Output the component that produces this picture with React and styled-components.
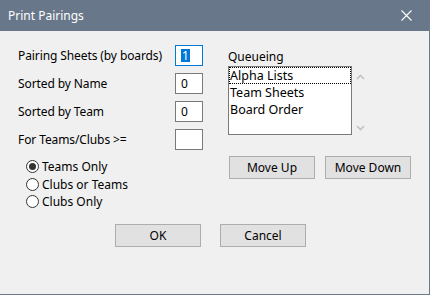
import React, { useState } from "react";
import styled, { createGlobalStyle } from "styled-components";

const GlobalStyle = createGlobalStyle`
  html, body {
    margin: 0;
    padding: 0;
    background: #f0f0f0;
  }
  * {
    box-sizing: border-box;
  }
`;

const Window = styled.div`
  width: 430px;
  height: 295px;
  display: flex;
  flex-direction: column;
  background: #f0f0f0;
  border-right: 1px solid #6b7a8b;
  border-bottom: 1px solid #6b7a8b;
  font-family: "Noto Sans", "Open Sans", sans-serif;
  font-size: 12px;
  color: #000;
`;

const TitleBar = styled.div`
  height: 31px;
  flex: none;
  display: flex;
  align-items: center;
  justify-content: space-between;
  background: #68788a;
  color: #fff;
  padding: 0 0 0 8px;
  font-size: 12px;
`;

const CloseBtn = styled.div`
  width: 46px;
  height: 31px;
  display: flex;
  align-items: center;
  justify-content: center;
`;

const Body = styled.div`
  flex: 1;
  padding: 14px 0 0 18px;
  display: flex;
  flex-direction: column;
`;

const Columns = styled.div`
  display: flex;
`;

const LeftCol = styled.div`
  width: 210px;
  display: flex;
  flex-direction: column;
`;

const RightCol = styled.div`
  display: flex;
  flex-direction: column;
`;

const FieldRow = styled.div`
  display: flex;
  align-items: center;
  height: 21px;
  margin-bottom: 7px;
`;

const FieldLabel = styled.span`
  width: 157px;
  letter-spacing: -0.1px;
`;

const NumBox = styled.div`
  width: 28px;
  height: 21px;
  background: #fff;
  border: 1px solid ${(p) => (p.$focused ? "#0078d7" : "#7a7a7a")};
  padding: 0 0 0 5px;
  display: flex;
  align-items: center;
`;

const Selected = styled.span`
  background: #0078d7;
  color: #fff;
  line-height: 13px;
  padding: 0 1px;
`;

const RadioGroup = styled.div`
  display: flex;
  flex-direction: column;
  padding: 1px 0 0 8px;
`;

const RadioRow = styled.label`
  display: flex;
  align-items: center;
  height: 17.5px;
  gap: 3px;
`;

const Circle = styled.span`
  width: 13px;
  height: 13px;
  border-radius: 50%;
  border: 1px solid #333;
  background: #fff;
  display: flex;
  align-items: center;
  justify-content: center;
  &::after {
    content: "";
    width: 7px;
    height: 7px;
    border-radius: 50%;
    background: ${(p) => (p.$checked ? "#333" : "transparent")};
  }
`;

const QueueLabel = styled.div`
  line-height: 16px;
  margin: 4px 0 1px;
`;

const ListWrap = styled.div`
  display: flex;
`;

const ListBox = styled.div`
  width: 124px;
  height: 69px;
  background: #fff;
  border: 1px solid #7a7a7a;
  display: flex;
  flex-direction: column;
`;

const ListItem = styled.div`
  height: 17px;
  line-height: 15px;
  padding: 0;
  border: 1px dotted ${(p) => (p.$focused ? "#000" : "transparent")};
  font-size: 12.5px;
`;

const ScrollCol = styled.div`
  width: 14px;
  display: flex;
  flex-direction: column;
  justify-content: space-between;
  align-items: center;
  padding: 8px 0 4px 2px;
`;

const ButtonRow = styled.div`
  display: flex;
  gap: ${(p) => p.$gap}px;
  margin: ${(p) => p.$margin};
`;

const Button = styled.button`
  width: 86px;
  height: 23px;
  background: #e1e1e1;
  border: 1px solid #adadad;
  font-family: inherit;
  font-size: 12px;
  color: #000;
  padding: 0;
`;

const Chevron = ({ up }) => (
  <svg width="9" height="6" viewBox="0 0 9 6">
    <path
      d={up ? "M1 5 L4.5 1.5 L8 5" : "M1 1 L4.5 4.5 L8 1"}
      stroke="#c2c2c2"
      strokeWidth="1.6"
      fill="none"
    />
  </svg>
);

export default function App() {
  const [mode, setMode] = useState("teams");
  const options = [
    ["teams", "Teams Only"],
    ["clubs-teams", "Clubs or Teams"],
    ["clubs", "Clubs Only"],
  ];

  return (
    <>
      <GlobalStyle />
      <Window>
        <TitleBar>
          <span>Print Pairings</span>
          <CloseBtn>
            <svg width="11" height="11" viewBox="0 0 11 11">
              <path d="M0.5 0.5 L10.5 10.5 M10.5 0.5 L0.5 10.5" stroke="#fff" strokeWidth="1.1" />
            </svg>
          </CloseBtn>
        </TitleBar>
        <Body>
          <Columns>
            <LeftCol>
              <FieldRow>
                <FieldLabel>Pairing Sheets (by boards)</FieldLabel>
                <NumBox $focused>
                  <Selected>1</Selected>
                </NumBox>
              </FieldRow>
              <FieldRow>
                <FieldLabel>Sorted by Name</FieldLabel>
                <NumBox>0</NumBox>
              </FieldRow>
              <FieldRow>
                <FieldLabel>Sorted by Team</FieldLabel>
                <NumBox>0</NumBox>
              </FieldRow>
              <FieldRow>
                <FieldLabel>For Teams/Clubs &gt;=</FieldLabel>
                <NumBox />
              </FieldRow>
              <RadioGroup>
                {options.map(([key, text]) => (
                  <RadioRow key={key} onClick={() => setMode(key)}>
                    <Circle $checked={mode === key} />
                    {text}
                  </RadioRow>
                ))}
              </RadioGroup>
            </LeftCol>
            <RightCol>
              <QueueLabel>Queueing</QueueLabel>
              <ListWrap>
                <ListBox>
                  <ListItem $focused>Alpha Lists</ListItem>
                  <ListItem>Team Sheets</ListItem>
                  <ListItem>Board Order</ListItem>
                </ListBox>
                <ScrollCol>
                  <Chevron up />
                  <Chevron />
                </ScrollCol>
              </ListWrap>
              <ButtonRow $gap={10} $margin="21px 0 0 1px">
                <Button>Move Up</Button>
                <Button>Move Down</Button>
              </ButtonRow>
            </RightCol>
          </Columns>
          <ButtonRow $gap={19} $margin="13px 0 0 97px">
            <Button>OK</Button>
            <Button>Cancel</Button>
          </ButtonRow>
        </Body>
      </Window>
    </>
  );
}
